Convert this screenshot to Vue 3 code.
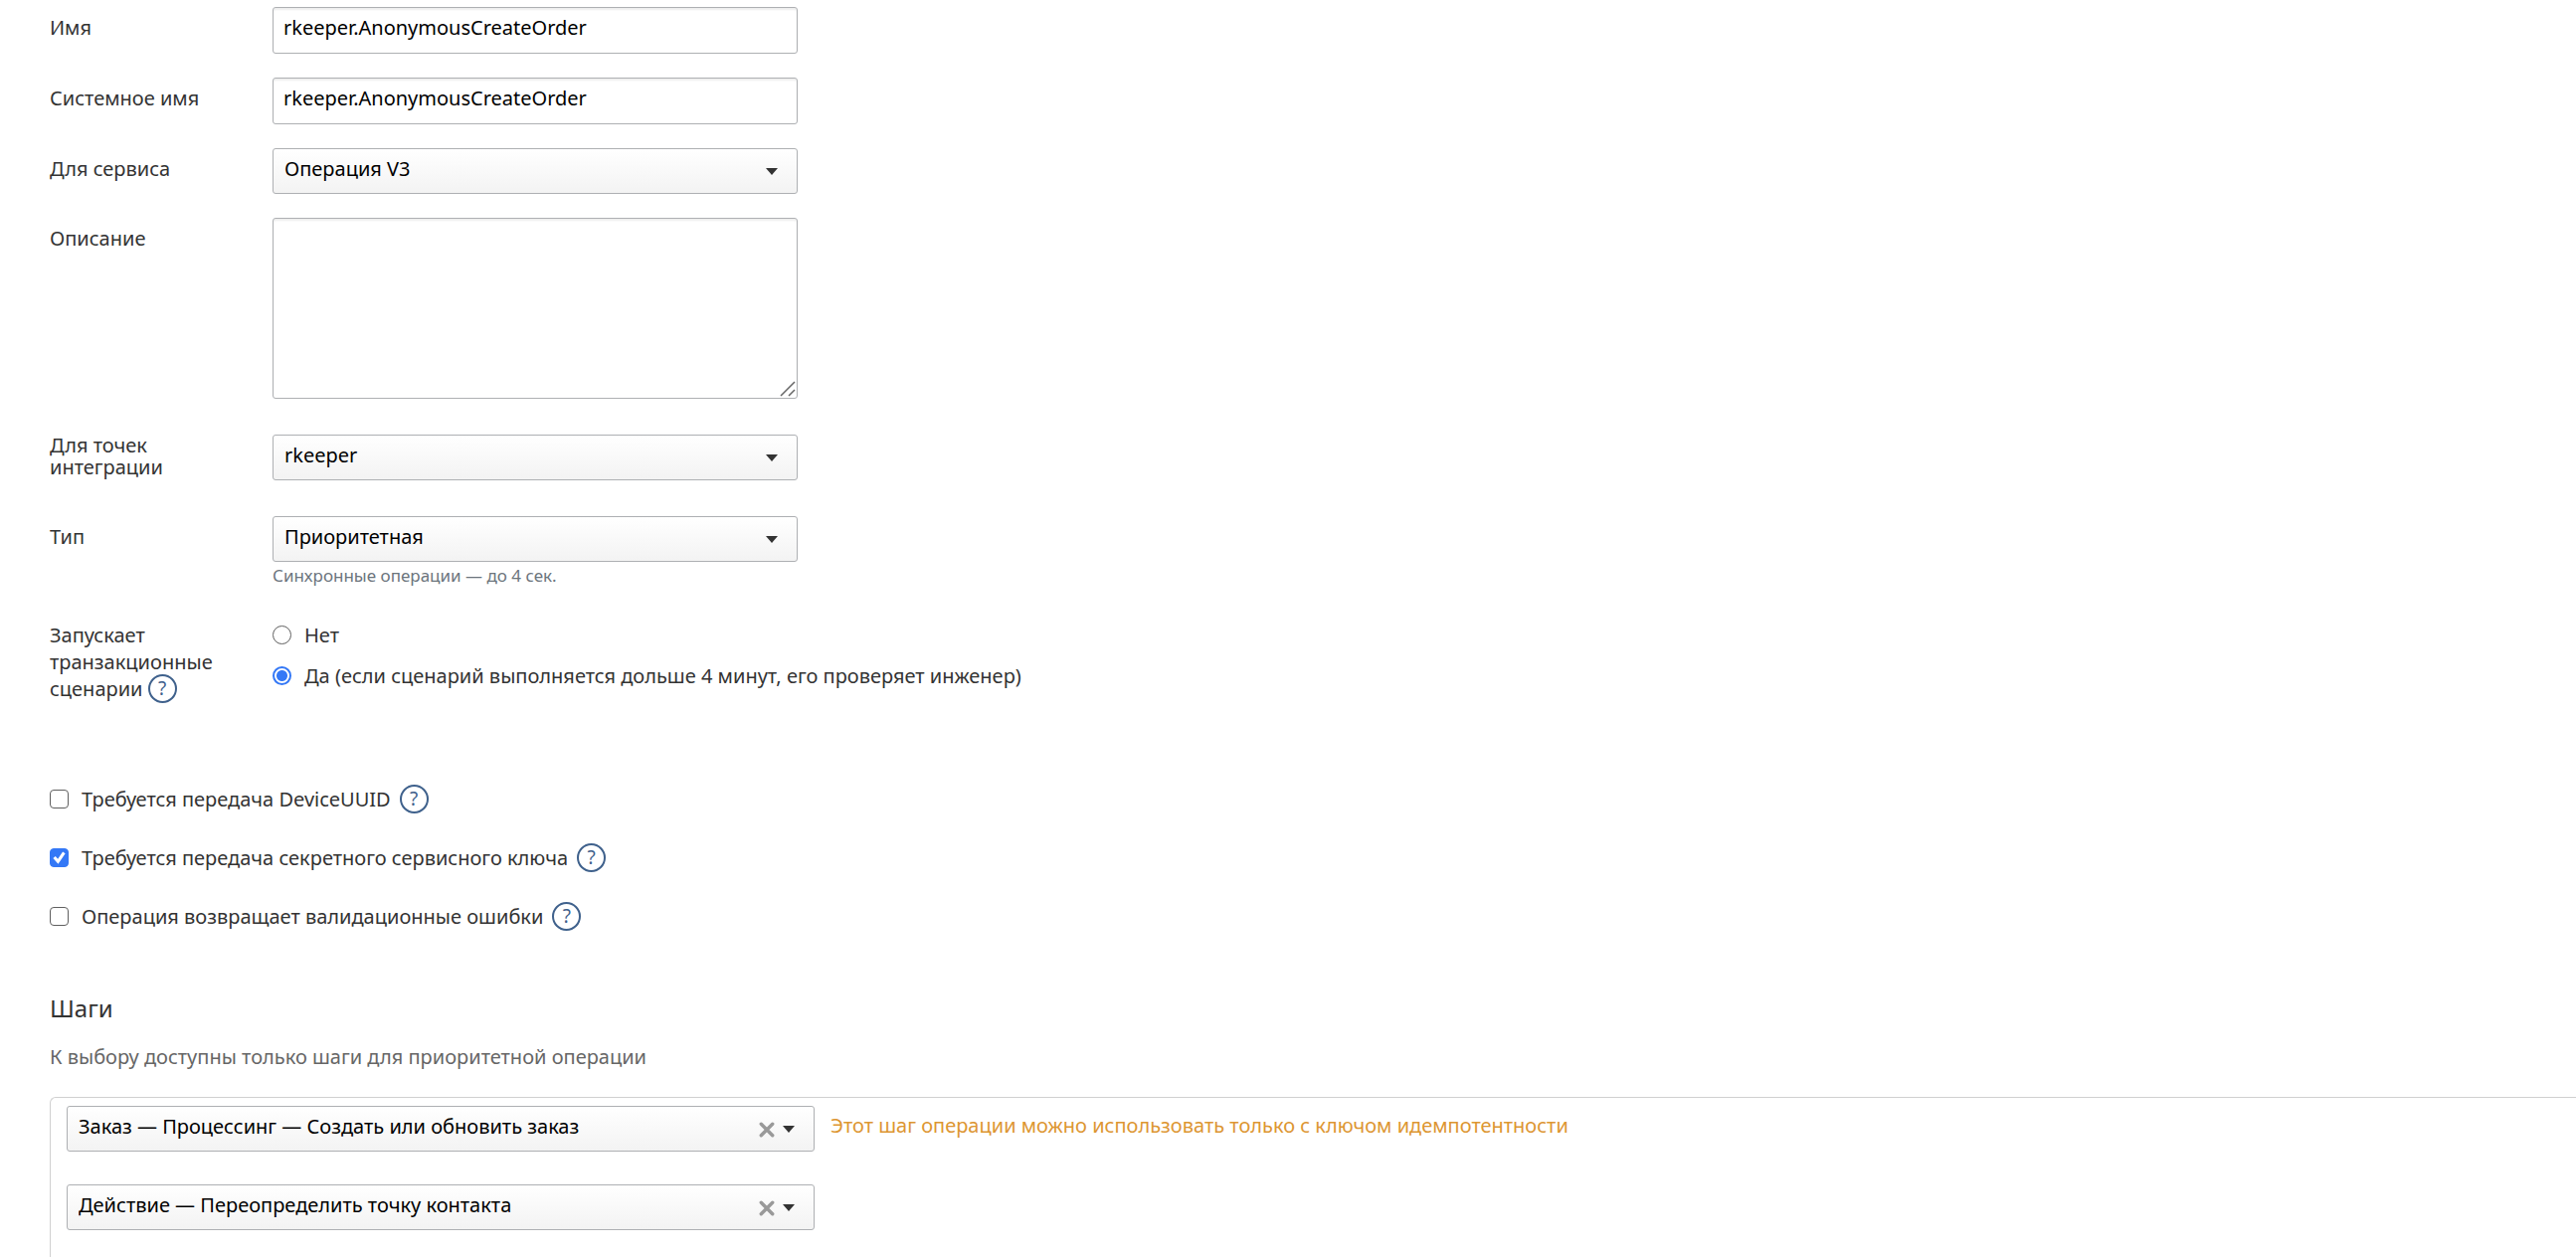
<script setup>
import { ref } from 'vue'

const name = ref('rkeeper.AnonymousCreateOrder')
const systemName = ref('rkeeper.AnonymousCreateOrder')
const service = ref('Операция V3')
const description = ref('')
const integration = ref('rkeeper')
const kind = ref('Приоритетная')
const transactional = ref('yes')

const flags = ref([
  { id: 'device', text: 'Требуется передача DeviceUUID', on: false },
  { id: 'secret', text: 'Требуется передача секретного сервисного ключа', on: true },
  { id: 'validation', text: 'Операция возвращает валидационные ошибки', on: false },
])

const steps = ref([
  {
    id: 'step-1',
    value: 'Заказ — Процессинг — Создать или обновить заказ',
    warning: 'Этот шаг операции можно использовать только с ключом идемпотентности',
  },
  { id: 'step-2', value: 'Действие — Переопределить точку контакта', warning: '' },
])
</script>

<template>
  <form class="page" @submit.prevent>
    <div class="row">
      <label class="label" for="name">Имя</label>
      <input id="name" v-model="name" class="control text" type="text" />
    </div>
    <div class="row">
      <label class="label" for="system-name">Системное имя</label>
      <input id="system-name" v-model="systemName" class="control text" type="text" />
    </div>
    <div class="row">
      <label class="label" for="service">Для сервиса</label>
      <div class="dropdown">
        <select id="service" v-model="service" class="control select">
          <option>Операция V3</option>
        </select>
        <svg class="arrow" viewBox="0 0 12 7" aria-hidden="true"><path d="M0 0h12L6 7z" /></svg>
      </div>
    </div>
    <div class="row loose">
      <label class="label" for="description">Описание</label>
      <div class="area-box">
        <textarea id="description" v-model="description" class="control area"></textarea>
        <svg class="grip" viewBox="0 0 16 16" aria-hidden="true"><path d="M1 15 15 1M9 15l6-6" /></svg>
      </div>
    </div>
    <div class="row loose">
      <label class="label multi" for="integration">Для точек интеграции</label>
      <div class="dropdown">
        <select id="integration" v-model="integration" class="control select">
          <option>rkeeper</option>
        </select>
        <svg class="arrow" viewBox="0 0 12 7" aria-hidden="true"><path d="M0 0h12L6 7z" /></svg>
      </div>
    </div>
    <div class="row loose">
      <label class="label" for="kind">Тип</label>
      <div>
        <div class="dropdown">
          <select id="kind" v-model="kind" class="control select">
            <option>Приоритетная</option>
          </select>
          <svg class="arrow" viewBox="0 0 12 7" aria-hidden="true"><path d="M0 0h12L6 7z" /></svg>
        </div>
        <p class="hint">Синхронные операции — до 4 сек.</p>
      </div>
    </div>

    <div class="row" role="radiogroup" aria-labelledby="transactional-label">
      <div id="transactional-label" class="label long">
        Запускает транзакционные сценарии
        <button class="help inline" type="button">?</button>
      </div>
      <div class="radios">
        <label class="choice">
          <input v-model="transactional" class="radio" type="radio" name="transactional" value="no" />
          Нет
        </label>
        <label class="choice">
          <input v-model="transactional" class="radio" type="radio" name="transactional" value="yes" />
          Да (если сценарий выполняется дольше 4 минут, его проверяет инженер)
        </label>
      </div>
    </div>

    <div class="flags">
      <div v-for="flag in flags" :key="flag.id" class="flag">
        <label class="choice">
          <input v-model="flag.on" class="check" type="checkbox" />
          {{ flag.text }}
        </label>
        <button class="help" type="button">?</button>
      </div>
    </div>

    <h2 class="title">Шаги</h2>
    <p class="note">К выбору доступны только шаги для приоритетной операции</p>

    <div class="steps">
      <div v-for="step in steps" :key="step.id" class="step">
        <div class="dropdown wide">
          <select v-model="step.value" class="control select" :aria-label="step.value">
            <option>{{ step.value }}</option>
          </select>
          <button class="clear" type="button" aria-label="Очистить">
            <svg viewBox="0 0 14 14" aria-hidden="true"><path d="M2 2l10 10M12 2 2 12" /></svg>
          </button>
          <svg class="arrow" viewBox="0 0 12 7" aria-hidden="true"><path d="M0 0h12L6 7z" /></svg>
        </div>
        <span v-if="step.warning" class="warning">{{ step.warning }}</span>
      </div>
    </div>
  </form>
</template>

<style>
body {
  margin: 0;
  background: #fff;
}
</style>

<style scoped>
.page {
  box-sizing: border-box;
  display: flex;
  flex-direction: column;
  min-height: 100vh;
  padding: 7px 0 0 50px;
  font-family: "Noto Sans", sans-serif;
  font-size: 20px;
  line-height: 27px;
  color: #333;
}

.row {
  display: grid;
  grid-template-columns: 176px minmax(0, 1fr);
  column-gap: 48px;
  align-items: start;
  margin-bottom: 24px;
}

.row.loose {
  margin-bottom: 36px;
}

.label {
  padding-top: 10px;
  line-height: 22px;
}

.label.multi {
  padding-top: 0;
}

.label.long {
  padding-top: 0;
  line-height: 27px;
}

.control {
  box-sizing: border-box;
  display: block;
  width: 100%;
  max-width: 528px;
  height: 46px;
  margin: 0;
  border: 1px solid #aeb0b3;
  border-radius: 3px;
  font: inherit;
  color: #000;
  outline: none;
}

.text {
  height: 47px;
  padding: 0 10px 6px;
  background: #fff;
  box-shadow: inset 0 2px 2px #eee;
}

.select {
  appearance: none;
  padding: 0 64px 6px 11px;
  background: linear-gradient(#fff, #f3f3f3);
}

.dropdown,
.area-box {
  position: relative;
  width: 100%;
  max-width: 528px;
}

.area {
  height: 182px;
  padding: 8px 10px;
  background: #fff;
  box-shadow: inset 0 2px 2px #eee;
  resize: none;
}

.grip {
  position: absolute;
  right: 2px;
  bottom: 2px;
  width: 16px;
  height: 16px;
  fill: none;
  stroke: #666;
  stroke-width: 1.5;
}

.arrow {
  position: absolute;
  top: 20px;
  right: 20px;
  width: 12px;
  height: 7px;
  fill: #333;
  pointer-events: none;
}

.hint {
  margin: 4px 0 0;
  font-size: 17px;
  line-height: 20px;
  color: #6c757d;
}

.radios {
  display: flex;
  flex-direction: column;
  gap: 14px;
}

.choice {
  display: flex;
  align-items: center;
  gap: 13px;
}

.radio,
.check {
  box-sizing: border-box;
  flex: none;
  width: 19px;
  height: 19px;
  margin: 0;
  appearance: none;
  border: 1px solid #606060;
  background: #fff;
}

.radio {
  border-radius: 50%;
}

.radio:checked {
  border: 2px solid #3478f6;
  background: radial-gradient(circle, #3478f6 5px, #fff 6px);
}

.check {
  border-radius: 4px;
}

.check:checked {
  border-color: #3478f6;
  background: #3478f6;
}

.check:checked::after {
  content: "";
  display: block;
  height: 100%;
  background: #fff;
  clip-path: polygon(14% 53%, 28% 41%, 42% 58%, 71% 14%, 86% 25%, 44% 87%);
}

.help {
  box-sizing: border-box;
  width: 29px;
  height: 29px;
  padding: 0;
  border: 2px solid #3f618c;
  border-radius: 50%;
  background: #fff;
  font: inherit;
  font-size: 19px;
  line-height: 25px;
  text-align: center;
  color: #3f618c;
}

.help.inline {
  margin: -5px 0;
  vertical-align: 1px;
}

.flags {
  display: flex;
  flex-direction: column;
  gap: 30px;
  margin-top: 59px;
}

.flag {
  display: flex;
  align-items: center;
  gap: 9px;
}

.title {
  margin: 63px 0 0;
  font-size: 24px;
  font-weight: 400;
  line-height: 30px;
}

.note {
  margin: 20px 0 27px;
  color: #666;
}

.steps {
  display: flex;
  flex: 1;
  flex-direction: column;
  gap: 33px;
  padding: 8px 16px;
  border: solid #d0d0d0;
  border-width: 1px 0 0 1px;
  border-radius: 6px 0 0;
}

.step {
  display: flex;
  gap: 16px;
}

.wide {
  max-width: 752px;
}

.wide .control {
  max-width: none;
}

.clear {
  position: absolute;
  top: 16px;
  right: 40px;
  width: 16px;
  height: 16px;
  padding: 0;
  border: 0;
  background: none;
}

.clear svg {
  display: block;
  width: 16px;
  height: 16px;
  fill: none;
  stroke: #999;
  stroke-width: 3;
  stroke-linecap: round;
}

.warning {
  padding-top: 6px;
  color: #dd9632;
}
</style>
